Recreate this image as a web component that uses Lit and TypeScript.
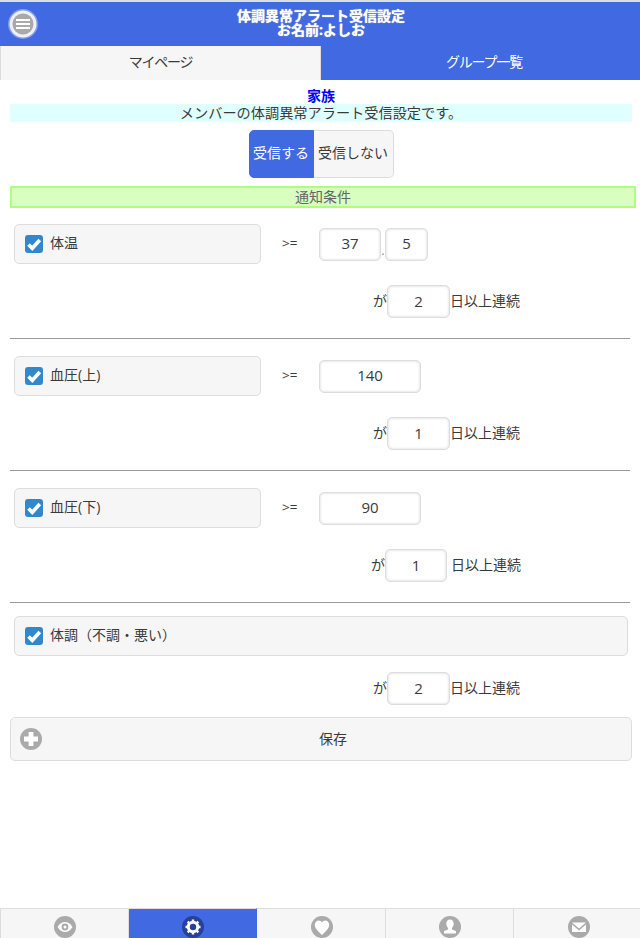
import { LitElement, html, css, svg } from "lit";
import { customElement } from "lit/decorators.js";

const check = html`<svg class="cb" viewBox="0 0 18 18"><rect width="18" height="18" rx="3" fill="#38c"/><path d="M3.500 9.500l3.800 3.800L14.800 5" fill="none" stroke="#fff" stroke-width="3.600"/></svg>`;

const navIcons = [
  svg`<circle cx="11" cy="11" r="11" fill="#aaa"/><path d="M3.500 11C6 7 8.500 6 11 6s5 1 7.500 5C16 15 13.500 16 11 16s-5-1-7.500-5z" fill="#fff"/><circle cx="11" cy="11" r="3.400" fill="#aaa"/><circle cx="11" cy="11" r="1.500" fill="#fff"/>`,
  svg`<circle cx="11" cy="11" r="11" fill="#26409c"/><circle cx="11" cy="11" r="4.700" fill="none" stroke="#fff" stroke-width="3"/><path d="M11 3.500v15M3.500 11h15M5.700 5.700l10.600 10.600M16.300 5.700L5.700 16.300" stroke="#fff" stroke-width="2.400" stroke-dasharray="2.600 9.800"/>`,
  svg`<circle cx="11" cy="11" r="11" fill="#aaa"/><path d="M11 19C7.500 15.500 3.800 12.500 3.800 8.800c0-2.600 1.900-4.300 4-4.300 1.400 0 2.500.7 3.200 2 .7-1.300 1.800-2 3.200-2 2.100 0 4 1.700 4 4.300 0 3.700-3.700 6.700-7.200 10.200z" fill="#fff"/>`,
  svg`<circle cx="11" cy="11" r="11" fill="#aaa"/><path d="M11 3.500c2.300 0 3.700 1.900 3.700 4.300 0 1.700-.7 3.200-1.700 4.100v1.400c0 .7 3 1 4 2v2.200H5v-2.200c1-1 4-1.300 4-2v-1.400c-1-.9-1.700-2.400-1.700-4.100 0-2.400 1.400-4.300 3.700-4.300z" fill="#fff"/>`,
  svg`<circle cx="11" cy="11" r="11" fill="#aaa"/><path d="M4 6.500h14L11 12.500z" fill="#fff"/><path d="M4 8.500l7 6 7-6v7.500H4z" fill="#fff"/>`,
];

@customElement("app-root")
export class AppRoot extends LitElement {
  static styles = css`
    :host {
      display: flex;
      flex-direction: column;
      min-height: 100vh;
      font-family: "Open Sans", "Noto Sans CJK JP", sans-serif;
      font-size: 14px;
      color: #3a3a3a;
      background: #fff;
      box-sizing: border-box;
      overflow: hidden;
    }
    * { box-sizing: border-box; }
    .header {
      height: 46px;
      border-top: 2px solid #ddd;
      background: #4169e1;
      color: #fff;
      position: relative;
      text-align: center;
      font-weight: 700;
      font-size: 14px;
      line-height: 14px;
      padding: 7px 0 0 2px;
      text-shadow: 0 0 1px #fff8c0;
    }
    .menu { position: absolute; left: 8px; top: 7px; width: 30px; height: 30px; }
    .tabs { display: grid; grid-template-columns: 321px 319px; height: 34px; line-height: 32px; text-align: center; letter-spacing: -1.200px; }
    .tab-a { background: #f6f6f6; border-left: 1px solid #ddd; border-right: 1px solid #ddd; }
    .tab-b { background: #4169e1; color: #fff; padding-left: 7px; }
    .content { padding: 7px 8px 0 10px; }
    .family { height: 17px; line-height: 17px; text-align: center; font-weight: 700; font-size: 14px; color: #00f; }
    .intro { height: 18px; line-height: 17px; text-align: center; background: #e0ffff; font-size: 14.200px; }
    .seg { display: flex; justify-content: center; margin: 8px 0; }
    .seg div { height: 48px; line-height: 44px; border: 1px solid #ddd; font-size: 14px; text-align: center; }
    .seg .on { width: 65px; background: #4169e1; color: #fff; border-color: #4169e1; border-radius: 5px 0 0 5px; }
    .seg .off { width: 80px; background: #f6f6f6; border-left: none; border-radius: 0 5px 5px 0; }
    .cond { height: 22px; line-height: 18px; background: #d8ffc0; border: 2px solid #adff80; color: #666; text-align: center; margin-right: -4px; }
    .sec { padding-top: 17px; }
    .sec.rule { border-bottom: 1px solid #999; margin-right: 2px; height: 132px; }
    .sec.first { height: 131px; padding-top: 16px; }
    .sec.last { padding-top: 13px; }
    .line1 { display: flex; align-items: center; height: 40px; padding-left: 4px; }
    .field {
      width: 247px; height: 40px; background: #f6f6f6; border: 1px solid #ddd; border-radius: 5px;
      display: flex; align-items: center; padding-left: 10px; gap: 7px;
    }
    .field.wide { width: 614px; }
    .cb { width: 18px; height: 18px; flex: none; }
    .field span { position: relative; top: -2px; }
    .op { width: 58px; padding-left: 21px; font-size: 13.500px; flex: none; position: relative; top: -1px; }
    .inp {
      height: 33px; border: 1px solid #ddd; border-radius: 5px; background: #fff; color: #3a3a3a;
      font: inherit; font-size: 15px; text-align: center; padding: 0 0 2px; box-shadow: inset 0 0 3px rgba(0,0,0,.18); outline: none; margin: 0; display: block;
    }
    .i62 { width: 62px; }
    .i63 { width: 63px; }
    .i43 { width: 43px; }
    .i102 { width: 102px; }
    .dot { width: 4px; text-align: center; font-size: 13px; color: #a86; align-self: flex-end; line-height: 22px; margin-bottom: 3px; }
    .line2 { display: flex; align-items: center; height: 33px; margin-top: 21px; padding-left: 363px; }
    .line2.inset { padding-left: 361px; }
    .line2.short { margin-top: 16px; }
    .line2 span { position: relative; top: -2px; }
    .ga { width: 14px; }
    .line2.inset .days { margin-left: 4px; }
    .save {
      height: 44px; margin-top: 12px; background: #f6f6f6; border: 1px solid #ddd; border-radius: 5px;
      position: relative; text-align: center; line-height: 41px; padding-left: 24px; width: 622px;
    }
    .plus { position: absolute; left: 9px; top: 10px; width: 22px; height: 22px; }
    .nav { margin-top: auto; display: grid; grid-template-columns: repeat(5, 128.500px); height: 30px; }
    .nav div { background: #f6f6f6; border: 1px solid #ddd; border-width: 1px 1px 0 0; height: 30px; display: flex; justify-content: center; padding: 7px 0 0 2px; }
    .nav div:first-child { border-left: 1px solid #ddd; }
    .nav .on { background: #4169e1; border-color: #ddd #4169e1; }
    .nav svg { width: 22px; height: 22px; display: block; }
  `;

  private row(label: string, val: string, days: string, inset = false) {
    return html`
      <div class="line1">
        <div class="field">${check}<span>${label}</span></div>
        <div class="op">&gt;=</div>
        <input class="inp i102" .value=${val} />
      </div>
      <div class="line2 ${inset ? "inset" : ""}">
        <span class="ga">が</span>
        <input class="inp ${inset ? "i62" : "i63"}" .value=${days} />
        <span class="days">日以上連続</span>
      </div>`;
  }

  render() {
    return html`
      <div class="header">
        <svg class="menu" viewBox="0 0 30 30">
          <circle cx="15" cy="15" r="15" fill="#fff" opacity=".35"/>
          <circle cx="15" cy="15" r="13.500" fill="#eef0f6"/>
          <circle cx="15" cy="15" r="10.500" fill="#a9a9a9"/>
          <path d="M8 11h14M8 15h14M8 19h14" stroke="#fff" stroke-width="2"/>
        </svg>
        <div>体調異常アラート受信設定</div>
        <div>お名前:よしお</div>
      </div>
      <div class="tabs"><div class="tab-a">マイページ</div><div class="tab-b">グループ一覧</div></div>
      <div class="content">
        <div class="family">家族</div>
        <div class="intro">メンバーの体調異常アラート受信設定です。</div>
        <div class="seg"><div class="on">受信する</div><div class="off">受信しない</div></div>
        <div class="cond">通知条件</div>
        <div class="sec rule first">
          <div class="line1">
            <div class="field">${check}<span>体温</span></div>
            <div class="op">&gt;=</div>
            <input class="inp i62" .value=${"37"} />
            <span class="dot">.</span>
            <input class="inp i43" .value=${"5"} />
          </div>
          <div class="line2"><span class="ga">が</span><input class="inp i63" .value=${"2"} /><span class="days">日以上連続</span></div>
        </div>
        <div class="sec rule">${this.row("血圧(上)", "140", "1")}</div>
        <div class="sec rule">${this.row("血圧(下)", "90", "1", true)}</div>
        <div class="sec last">
          <div class="line1"><div class="field wide">${check}<span>体調（不調・悪い）</span></div></div>
          <div class="line2 short"><span class="ga">が</span><input class="inp i63" .value=${"2"} /><span class="days">日以上連続</span></div>
        </div>
        <div class="save">
          <svg class="plus" viewBox="0 0 22 22"><circle cx="11" cy="11" r="11" fill="#aaa"/><path d="M11 4v14M4 11h14" stroke="#fff" stroke-width="4.800"/></svg>
          保存
        </div>
      </div>
      <div class="nav">
        ${navIcons.map((ic, i) => html`<div class=${i === 1 ? "on" : ""}><svg viewBox="0 0 22 22">${ic}</svg></div>`)}
      </div>
    `;
  }
}
